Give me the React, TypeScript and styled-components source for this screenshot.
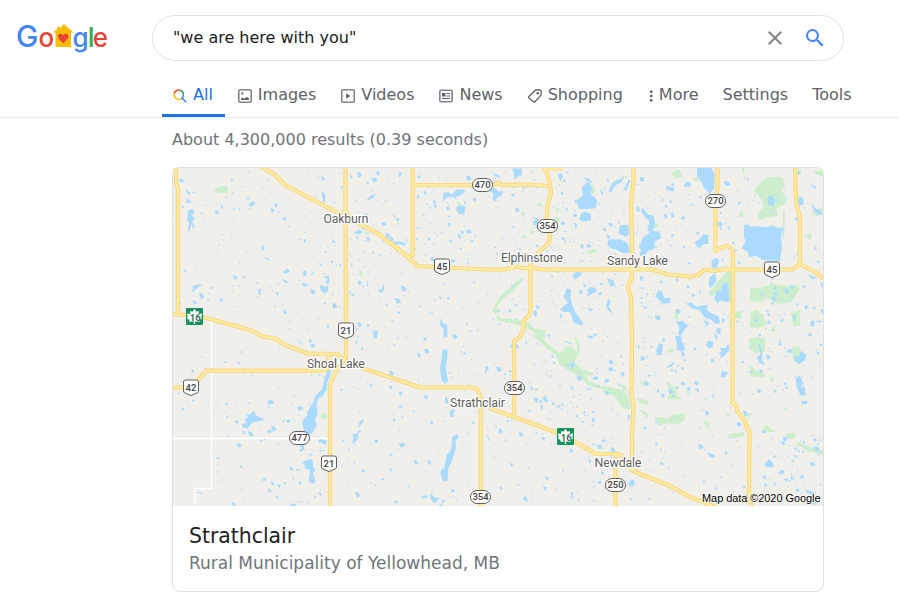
import type { ReactNode } from "react";
import styled, { createGlobalStyle } from "styled-components";

const App = () => {
  return (
    <>
      <GlobalStyle />
      <Header>
        <Logo />
        <SearchBox>
          <Query>"we are here with you"</Query>
          <ClearIcon />
          <SearchIcon />
        </SearchBox>
      </Header>

      <Nav>
        {tabs.map((tab) => (
          <Tab key={tab.title} $active={tab.active} $gap={tab.gap}>
            {tab.icon}
            {tab.title}
          </Tab>
        ))}
      </Nav>

      <Main>
        <Stats>About 4,300,000 results (0.39 seconds)</Stats>
        <Card>
          <TownMap />
          <CardText>
            <Title>Strathclair</Title>
            <Subtitle>Rural Municipality of Yellowhead, MB</Subtitle>
          </CardText>
        </Card>
      </Main>
    </>
  );
};

export default App;

const Logo = () => (
  <LogoSvg viewBox="0 0 92 34">
    <text y="25" fontFamily="Inter, sans-serif" fontWeight="500">
      <tspan x="-1" fontSize="30" fill="#4285f4">G</tspan>
      <tspan x="21.600" fontSize="26" fill="#ea4335">o</tspan>
      <tspan x="55.400" fontSize="26" fill="#4285f4" letterSpacing="-.8">g</tspan>
      <tspan fontSize="27" fill="#34a853" letterSpacing="-1.800">l</tspan>
      <tspan fontSize="26" fill="#ea4335">e</tspan>
    </text>
    <path d="M36 10.500 40 7.200V5h3v1L47 2l9.500 8.500H54V25H38.500V10.500Z" fill="#fbbc04" />
    <path d="M46.200 21.500C43 18.500 41 16.500 41 14.300c0-3.300 4-3.400 5.200-.9 1.200-2.500 5.200-2.400 5.200.9 0 2.200-2 4.200-5.200 7.200Z" fill="#ea4335" />
  </LogoSvg>
);

const ClearIcon = () => (
  <BoxIcon viewBox="0 0 24 24" $color="#80868b">
    <path d="M19 6.410 17.590 5 12 10.590 6.410 5 5 6.410 10.590 12 5 17.590 6.410 19 12 13.410 17.590 19 19 17.590 13.410 12Z" />
  </BoxIcon>
);

const SearchIcon = () => (
  <BoxIcon viewBox="0 0 24 24" $color="#4285f4">
    <path d="M15.500 14h-.79l-.28-.27A6.471 6.471 0 0 0 16 9.500 6.500 6.500 0 1 0 9.500 16c1.610 0 3.090-.59 4.230-1.570l.27.28v.79l5 4.990L20.490 19l-4.990-5zm-6 0C7.010 14 5 11.990 5 9.500S7.010 5 9.500 5 14 7.010 14 9.500 11.990 14 9.500 14z" />
  </BoxIcon>
);

const AllIcon = () => (
  <TabIcon viewBox="0 0 14 14" fill="none" strokeWidth="1.500">
    <path d="M1.300 4.200A4.700 4.700 0 0 1 7.300 1.300" stroke="#ea4335" />
    <path d="M7.300 1.300A4.700 4.700 0 0 1 10.400 5.700" stroke="#34a853" />
    <path d="M10.400 5.700A4.700 4.700 0 0 1 8 9.800M9 9l4.200 4.200" stroke="#4285f4" />
    <path d="M8 9.800A4.700 4.700 0 0 1 1.300 4.200" stroke="#fbbc04" />
  </TabIcon>
);

const ImageIcon = () => (
  <TabIcon viewBox="0 0 14 14">
    <rect x=".8" y=".8" width="12.400" height="12.400" rx="1.200" fill="none" stroke="#80868b" strokeWidth="1.600" />
    <path d="M3 11V9.600l1.800-1.100 1.700 1.200 2.300-2L11 9.800V11Z" fill="#5f6368" />
    <circle cx="4.400" cy="4.400" r="1.100" fill="#5f6368" />
  </TabIcon>
);

const VideoIcon = () => (
  <TabIcon viewBox="0 0 14 14">
    <rect x=".8" y=".8" width="12.400" height="12.400" rx="1.200" fill="none" stroke="#80868b" strokeWidth="1.600" />
    <path d="M5.200 4.200v5.600l4.100-2.800Z" fill="#5f6368" />
  </TabIcon>
);

const NewsIcon = () => (
  <TabIcon viewBox="0 0 14 14">
    <rect x=".8" y="1.300" width="12.400" height="11.400" rx="1.200" fill="none" stroke="#80868b" strokeWidth="1.600" />
    <path d="M3 4h3.500v3.500H3Z" fill="#5f6368" />
    <path d="M7.500 4.500H11M7.500 7H11M3 9.500h8" stroke="#5f6368" strokeWidth="1.100" />
  </TabIcon>
);

const TagIcon = () => (
  <TabIcon viewBox="0 0 14 14">
    <path d="m.9 7.500 5.800-5.800Q7.300 1.100 8.200 1l3.300-.2q1.600 0 1.700 1.600L13 5.400q0 .9-.6 1.500L6.900 12.700q-.7.700-1.400 0L.9 8.900q-.6-.7 0-1.400Z" fill="none" stroke="#5f6368" strokeWidth="1.300" />
    <circle cx="9.700" cy="4.300" r="1.250" fill="#5f6368" />
  </TabIcon>
);

const MoreIcon = () => (
  <DotsIcon viewBox="0 0 4 14" fill="#5f6368">
    <rect x="1" y="1.500" width="2.500" height="2.500" rx=".7" />
    <rect x="1" y="5.800" width="2.500" height="2.500" rx=".7" />
    <rect x="1" y="10.100" width="2.500" height="2.500" rx=".7" />
  </DotsIcon>
);

type TabData = { title: string; gap: number; active?: boolean; icon?: ReactNode };

const tabs: TabData[] = [
  { title: "All", gap: 13, active: true, icon: <AllIcon /> },
  { title: "Images", gap: 25, icon: <ImageIcon /> },
  { title: "Videos", gap: 25, icon: <VideoIcon /> },
  { title: "News", gap: 25, icon: <NewsIcon /> },
  { title: "Shopping", gap: 26, icon: <TagIcon /> },
  { title: "More", gap: 24, icon: <MoreIcon /> },
  { title: "Settings", gap: 24 },
  { title: "Tools", gap: 0 },
];

// Terrain is drawn per tile, three units to a map pixel
const tiles = [
  {
    x: 165,
    y: 160,
    park: "M145 98 157 83 172 77 189 85 188 98ZM583 335 592 331 594 347 583 345ZM198 392 205 387 209 399ZM600 218 612 215 614 224 602 225Z",
    water:
      "M70 150 85 148 88 158 79 165 89 175 82 185 90 205 84 203 80 192 72 216 68 210 73 190 66 180ZM65 85 70 95 77 99 74 108 70 100 64 98ZM65 115 75 121 75 130 65 130ZM252 130 268 123 270 132 262 139 255 138ZM240 107 248 113 256 115 248 119ZM165 132 175 140 171 147ZM81 378 97 375 107 369 98 384 90 389ZM414 333 423 333 425 344 416 352ZM360 330 368 326 375 334 367 340 358 340ZM352 355 370 365 372 370 357 367ZM473 350 492 348 493 370 480 369 488 357ZM464 375 479 380 490 376 489 392 480 401 467 391ZM412 368 428 372 428 379 413 377ZM604 121 618 106 630 102 628 110 612 120ZM567 216 582 209 594 215 588 221 570 222ZM470 96 480 100 481 129 474 125ZM296 291 308 293 318 303 308 300ZM440 330 448 341 443 342ZM580 360 590 366 586 378 579 370ZM626 513 638 512 636 535 625 534ZM570 500 579 507 576 514ZM278 387 285 386 288 405 282 404ZM333 395 342 397 338 410ZM640 391 650 388 655 370 658 389 648 400Z",
  },
  {
    x: 385,
    y: 160,
    park: "M413 350 416 358 385 393 348 423 335 440 344 457 330 460 321 455 332 430 348 405ZM330 460 350 475 400 479 436 490 438 502 480 512 479 537 464 530 434 508 400 496 338 481ZM525 40 536 50 523 70ZM618 60 630 92 620 105ZM455 133 464 124 474 140 466 141ZM510 145 522 147 515 161ZM408 235 415 223 426 233ZM406 159 420 154 418 172ZM508 170 526 176 515 195ZM215 120 228 133 218 138ZM605 273 630 267 636 275 610 281ZM432 200 447 217 437 224ZM37 180 43 190 38 197Z",
    water:
      "M591 80 610 64 620 82 618 105 637 120 632 145 603 147 581 146 577 120 593 107ZM590 158 603 155 618 163 618 181 595 185 582 177ZM596 53 612 55 623 68 606 64ZM175 100 190 96 200 104 215 88 234 91 230 105 215 109 200 111 185 113 173 124ZM308 92 327 83 342 95 355 93 349 108 335 112 334 125 322 118 326 100ZM213 142 226 135 240 139 239 160 225 164 215 153ZM382 25 411 26 410 49 400 49 389 59 387 42ZM318 32 328 41 343 46 348 55 330 49ZM230 85 240 93 236 106ZM545 385 558 389 556 415 562 435 571 456 596 492 588 497 567 488 555 456 537 456 525 448 548 430 540 402ZM20 247 40 244 63 250 60 257 40 251 25 263ZM563 346 575 335 592 338 583 350 568 359ZM167 475 176 492 187 493 187 530 176 532 176 506 165 496ZM606 389 617 380 628 385 629 395 613 407ZM448 450 456 455 454 472 445 465ZM607 443 625 447 616 456ZM376 103 388 101 385 111ZM264 113 274 115 272 125 263 121ZM60 235 66 239 65 250ZM642 83 655 100 653 108ZM246 301 254 312 248 315Z",
  },
  {
    x: 600,
    y: 160,
    park: "M490 60 505 52 530 50 549 55 556 88 540 87 556 105 558 130 530 145 532 168 512 170 478 179 472 163 490 140 485 120 462 90ZM592 24 605 31 600 44 590 40ZM228 27 240 32 245 50 230 56 215 43ZM550 150 555 155 552 235 547 230ZM450 382 478 385 520 371 559 378 590 373 600 386 580 418 565 428 532 432 500 412 482 426 450 422ZM453 455 468 450 490 465 501 494 475 505 449 500ZM378 335 395 335 395 428 372 420 350 395 334 410 325 400 353 365ZM408 456 425 452 423 476 404 473ZM227 450 243 454 232 472 240 480 223 475ZM635 155 668 140 668 160 650 169ZM615 230 635 218 632 240ZM414 170 424 150 433 170ZM275 58 290 50 297 65ZM425 24 435 24 430 45ZM640 36 669 30 666 48 650 45ZM147 202 170 190 175 198 158 209ZM510 510 526 496 524 515ZM572 460 600 450 600 497 580 500Z",
    water:
      "M432 194 445 194 453 200 470 198 500 202 520 196 545 211 543 235 546 262 540 303 490 301 470 287 448 291 443 275 425 265 437 244 432 230ZM291 24 334 24 344 42 342 85 332 98 313 86 304 65 291 48ZM123 150 130 145 145 164 161 167 166 189 158 211 180 218 184 235 165 243 162 268 143 273 133 292 119 286 124 270 117 260 130 230 148 220 142 202 150 187 130 164ZM60 195 85 195 88 220 80 230 55 222ZM25 240 40 238 65 240 83 250 90 278 70 280 45 268 30 265 22 255ZM25 95 37 67 67 54 66 65 43 78 36 95ZM300 235 310 223 325 225 325 252 310 252 300 264 291 260 284 247ZM502 110 515 108 526 122 520 138 505 135ZM595 110 610 113 611 133 595 138ZM634 130 645 145 660 150 668 163 655 165 640 151ZM335 300 350 294 358 299 351 324 335 323ZM330 352 345 340 350 362 333 385 325 375ZM347 395 363 390 370 370 385 370 388 425 373 425 364 421 352 430 343 417ZM258 430 275 428 290 440 324 434 320 448 333 460 355 468 361 490 346 492 335 480 315 473 298 450 275 445ZM228 485 245 482 265 497 256 505 246 523 235 524 238 500ZM175 390 187 395 193 415 212 412 210 429 190 432 178 420 166 409ZM190 160 204 168 196 179ZM260 65 272 68 273 79 250 81ZM198 77 224 83 220 95 198 88ZM25 415 33 425 26 440 38 460 28 455 18 438ZM85 60 92 61 80 90 70 92ZM120 50 133 52 131 65 120 62ZM635 480 645 485 640 502 629 495ZM576 464 590 470 582 483ZM350 505 362 504 361 524 350 519ZM625 345 650 352 637 358ZM660 366 669 370 667 388ZM320 483 330 490 315 503ZM410 320 415 330 409 337ZM520 395 534 400 528 410ZM480 400 489 396 487 410ZM500 462 510 458 508 470ZM462 480 472 477 470 490Z",
  },
  {
    x: 165,
    y: 335,
    park: "M470 132 488 113 495 125 485 136 476 130ZM466 240 480 234 489 246 471 253ZM392 402 407 402 405 410 395 409ZM340 38 347 40 344 49Z",
    water:
      "M487 105 500 108 487 143 486 163 472 184 460 190 454 213 459 240 450 251 456 272 440 296 421 302 414 275 412 258 427 240 432 220 442 208 450 185 470 163 478 134ZM407 330 415 328 419 349 411 343ZM243 235 254 240 267 225 272 240 301 254 282 259 262 262 248 280 233 279 231 268 242 264 240 250 250 250ZM417 378 435 372 443 376 444 394 452 405 444 414 452 440 443 447 431 437 435 406 420 400ZM306 200 315 193 328 201 323 207 310 207ZM458 317 467 312 484 316 484 330 470 324ZM580 280 583 262 596 250 594 262ZM562 299 581 293 577 316 561 326 565 310ZM627 315 639 315 639 324 631 324ZM335 448 347 451 343 461ZM127 197 142 209 135 204ZM90 473 108 472 114 479 101 475ZM376 506 392 506 395 512 377 512ZM458 472 469 475 468 485ZM614 143 623 151 615 159ZM570 20 578 13 575 30ZM648 428 660 433 650 437Z",
  },
  {
    x: 385,
    y: 335,
    park: "M440 0 460 0 485 24 520 52 538 48 535 38 560 35 581 57 568 80 590 102 627 115 617 125 603 117 610 137 650 154 632 159 607 149 583 124 553 109 522 88 513 63 487 39ZM569 5 581 20 586 40 578 62 575 27ZM650 160 690 162 690 182 676 180ZM445 160 458 160 452 168Z",
    water:
      "M172 45 187 42 187 70 182 95 189 138 182 146 169 137 165 100 170 70ZM202 305 215 297 222 305 211 318 213 338 202 375 189 402 188 437 174 438 166 414 169 404 178 399 185 360 199 343ZM180 185 188 190 190 206 180 204ZM202 223 209 224 203 246 196 246 194 230ZM15 105 26 112 24 122 13 121ZM136 474 147 487 163 490 148 505 136 491ZM304 288 308 305 318 317 310 315ZM10 398 21 403 18 410ZM445 185 459 190 458 205 450 199ZM472 190 480 182 490 197 483 204ZM465 207 475 216 469 227ZM556 340 565 347 554 355ZM610 372 618 375 614 388ZM474 455 486 457 480 467ZM417 492 430 494 424 501ZM606 2 625 2 622 12 610 8ZM555 470 565 475 562 487Z",
  },
  {
    x: 600,
    y: 335,
    park: "M0 154 30 155 65 164 82 180 92 208 90 225 70 220 44 184 15 174ZM48 145 75 150 86 170 65 158ZM108 190 140 195 149 212 119 203ZM115 222 148 237 140 249ZM164 246 205 250 215 239 254 236 255 254 230 268 206 264 175 272ZM196 137 230 160 228 180 250 191 201 194 210 170ZM118 139 143 140 130 154ZM201 46 216 38 223 49 206 55ZM308 255 325 262 329 288ZM383 298 430 291 434 303 410 309 394 308ZM440 255 446 236 461 232ZM487 290 493 272 503 270 515 283 532 291 505 291ZM553 296 590 295 583 310 568 311ZM591 320 640 340 669 345 669 361 625 349 592 330ZM447 10 475 8 495 10 495 50 465 55 448 40ZM449 90 465 103 494 118 493 127 451 124ZM576 33 598 35 606 85 590 88 577 63ZM508 125 523 125 517 148ZM370 224 392 244 382 242ZM312 184 323 192 318 200ZM545 229 563 212 560 225ZM252 155 270 174 264 177Z",
    water:
      "M225 3 243 1 246 20 255 40 249 50 230 46 230 23ZM170 42 178 24 189 29 184 60 170 61ZM360 38 377 40 386 25 388 45 370 65 359 68 365 55ZM324 17 340 20 338 37 328 41 318 30ZM200 97 217 84 225 82 216 94 202 99ZM474 25 481 30 488 53 486 75 496 91 480 84 470 68 482 57ZM583 60 595 66 603 47 620 60 615 75 598 88 582 75ZM587 127 600 123 610 145 603 155 615 158 617 181 602 182 590 155ZM605 197 623 198 621 208 604 206ZM92 435 103 434 104 450 90 456 85 447ZM320 348 329 355 344 360 345 370 328 364ZM492 390 508 371 521 388 520 397 500 395ZM540 405 553 405 553 417 540 415ZM574 412 580 435 572 433ZM550 432 565 430 560 441ZM617 463 642 473 640 480 620 473ZM365 107 380 113 374 130 363 124ZM165 320 174 324 168 333ZM140 488 153 489 147 495ZM188 8 195 10 193 23 186 18ZM432 480 458 476 458 488 438 493ZM489 420 499 425 493 436Z",
  },
];

// [x, y, width, height, count] of an area sprinkled with small ponds
const pondAreas = [
  [175, 170, 105, 140, 75],
  [280, 170, 130, 180, 170],
  [415, 170, 200, 95, 165],
  [415, 275, 130, 110, 75],
  [545, 270, 85, 150, 105],
  [605, 170, 130, 95, 95],
  [637, 275, 93, 120, 130],
  [735, 170, 86, 95, 35],
  [736, 275, 86, 120, 85],
  [175, 335, 160, 80, 40],
  [212, 395, 115, 95, 80],
  [180, 490, 290, 14, 20],
  [335, 370, 145, 120, 65],
  [485, 360, 140, 85, 75],
  [490, 445, 120, 58, 30],
  [635, 400, 110, 95, 45],
  [755, 430, 66, 72, 65],
  [583, 435, 55, 65, 28],
];

const makePonds = () => {
  let seed = 71;
  const rand = () => {
    seed = (seed * 16807) % 2147483647;
    return seed / 2147483647;
  };
  let d = "";
  pondAreas.forEach(([x, y, width, height, count]) => {
    for (let i = 0; i < count; i++) {
      const px = x + rand() * width;
      const py = y + rand() * height;
      const size = 0.9 + rand() ** 4 * 2.4;
      const w = size * (0.8 + rand() * 0.7);
      const lean = (rand() - 0.5) * size;
      d += `M${px.toFixed(1)} ${py.toFixed(1)}l${w.toFixed(1)} ${lean.toFixed(1)} ${(w * 0.4).toFixed(1)} ${size.toFixed(1)} ${(-w).toFixed(1)} ${(size * 0.5).toFixed(1)}Z`;
    }
  });
  return d;
};

const ponds = makePonds();

const roads = [
  "M176 166V183L178 188V314",
  "M172 314 185 315 203 317 250 330 264 337 274 338 285 345 308 353.500 337 354 344 360 365 369 395 379 420 387.500H472Q478 388 479.500 394L481 401 492 409 514 417 555 432 574 441 596 454H617Q622 454 626 461L632 470 640 474 670 486 690 497 716 507",
  "M345.500 166 346 356 342 363 336 371 330 385V508",
  "M172 387.500H192L198 380 206.500 370.700H322Q328.500 370 328.500 366V354",
  "M260 166 275 175 285 185 337 212.500 345 213 358 223 377 233 398 249 408 257 417 266 485 269.500H505L517 266.500 524 268.500 533 267.500 540 269.500H652L668 274.500 690 276.700 698 275 705 269.500 715 271 721 269.500H792L800 264 813 271 825 279",
  "M412.800 166V255L408 257",
  "M413 185H493L498 183 502 185 527 184.500 548 186",
  "M564 168.500H544L547 173 550.500 187 551 193 547 207V227L550 235 549 243 538 253 530.500 263V313L523 322 524 328 520 337 514 341V417",
  "M480.700 402V508",
  "M633.500 166V180L631 203 632 240V277L628 287 631 297 632 340 631.500 395 633.500 405 632 435V470",
  "M717.500 166V190L715.500 197V251L725 246Q731 246 733 252L732.500 403 736.500 406.500 737 411 745.500 422 747 428 749.500 431 749 498 752 508",
  "M795 166 796 203 800 217V264",
  "M615.500 454V508",
];

const shields = [
  { x: 482.5, y: 185, label: "470" },
  { x: 547.5, y: 226, label: "354" },
  { x: 514.5, y: 388, label: "354" },
  { x: 480.5, y: 497, label: "354" },
  { x: 299.5, y: 438, label: "477" },
  { x: 615.5, y: 485, label: "250" },
  { x: 715.5, y: 201, label: "270" },
  { x: 442, y: 266.5, label: "45" },
  { x: 772, y: 269.5, label: "45" },
  { x: 346, y: 330.5, label: "21" },
  { x: 329, y: 463.5, label: "21" },
  { x: 191, y: 387.5, label: "42" },
];

const towns = [
  { x: 346, y: 223, width: 45, name: "Oakburn" },
  { x: 532, y: 262, width: 62, name: "Elphinstone" },
  { x: 637.5, y: 265.4, width: 61, name: "Sandy Lake" },
  { x: 336, y: 368, width: 58, name: "Shoal Lake" },
  { x: 477.5, y: 407, width: 55, name: "Strathclair" },
  { x: 618, y: 467.4, width: 47, name: "Newdale" },
];

const Shield = ({ x, y, label }: { x: number; y: number; label: string }) => (
  <g transform={`translate(${x} ${y})`}>
    {label.length > 2 ? (
      <rect x="-10" y="-6.500" width="20" height="13" rx="6.500" fill="#fff" stroke="#606060" />
    ) : (
      <path d="M-7.500-5.500Q-7.500-7.500-5.500-7.500H5.500Q7.500-7.500 7.500-5.500V3.500Q7.500 5 6 5.500L0 8-6 5.500Q-7.500 5-7.500 3.500Z" fill="#fff" stroke="#606060" />
    )}
    <ShieldText y={label.length > 2 ? 3.3 : 3.5}>{label}</ShieldText>
  </g>
);

const TransCanada = ({ x, y }: { x: number; y: number }) => (
  <g transform={`translate(${x} ${y})`}>
    <rect x="-8.500" y="-8.500" width="17" height="17" rx="1" fill="#15935f" />
    <path d="M0-7.700 2-4.800 4.300-5.500 4.300-2.500 7.800-3 6.800 0 7.500 2 5 3.500 5 5.300 .6 5V7.500H-.6V5L-5 5.300-5 3.500-7.500 2-6.800 0-7.800-3-4.300-2.500-4.300-5.500-2-4.800Z" fill="#fff" />
    <RouteText x=".7" y="4">16</RouteText>
  </g>
);

const TownMap = () => (
  <MapSvg viewBox="173 168 650 338">
    <rect x="173" y="168" width="650" height="338" fill="#f0efea" />
    {tiles.map((tile) => (
      <g key={`${tile.x}-${tile.y}`} transform={`translate(${tile.x} ${tile.y}) scale(.33333)`}>
        <path d={tile.park} fill="#cdeecd" />
      </g>
    ))}
    <path d={ponds} fill="#aadaff" />
    {tiles.map((tile) => (
      <g key={`${tile.x}-${tile.y}`} transform={`translate(${tile.x} ${tile.y}) scale(.33333)`}>
        <path d={tile.water} fill="#aadaff" />
      </g>
    ))}
    <path d="M211.500 320V488.500H195V506M173 438.500H327" fill="none" stroke="#fff" strokeWidth="1.300" />
    <g fill="none" strokeLinejoin="round">
      {roads.map((road) => (
        <path key={road} d={road} stroke="#f9d577" strokeWidth="4.200" />
      ))}
      {roads.map((road) => (
        <path key={road} d={road} stroke="#ffeba3" strokeWidth="2.300" />
      ))}
    </g>
    {shields.map((shield) => (
      <Shield key={`${shield.x}-${shield.y}`} {...shield} />
    ))}
    <TransCanada x={194.5} y={316.5} />
    <TransCanada x={565.5} y={436.5} />
    {towns.map((town) => (
      <TownText key={town.name} x={town.x} y={town.y} textLength={town.width}>
        {town.name}
      </TownText>
    ))}
    <Credit x="820.500" y="501.500" textLength="118.500">
      Map data ©2020 Google
    </Credit>
  </MapSvg>
);

const GlobalStyle = createGlobalStyle`
  * {
    box-sizing: border-box;
  }

  body {
    margin: 0;
    overflow: hidden;
    background: #fff;
    font-family: "DejaVu Sans", sans-serif;
    font-size: 16px;
  }
`;

const Header = styled.header`
  display: flex;
  align-items: flex-start;
  height: 72px;
  padding: 15px 0 0 17px;
`;

const LogoSvg = styled.svg`
  width: 92px;
  height: 34px;
  margin: 7px 43px 0 0;
  overflow: visible;
`;

const SearchBox = styled.div`
  display: flex;
  align-items: center;
  width: 692px;
  height: 46px;
  padding: 0 16px 0 20px;
  border: 1px solid #dfe1e5;
  border-radius: 24px;
`;

const Query = styled.span`
  flex: 1;
  padding-bottom: 2px;
  color: #202124;
`;

const BoxIcon = styled.svg<{ $color: string }>`
  width: 24px;
  height: 24px;
  margin-left: 16px;
  fill: ${(props) => props.$color};
`;

const Nav = styled.nav`
  display: flex;
  height: 46px;
  padding-left: 162px;
  border-bottom: 1px solid #ebebeb;
`;

const Tab = styled.div<{ $active?: boolean; $gap: number }>`
  display: flex;
  flex-shrink: 0;
  align-items: center;
  height: 45px;
  margin-right: ${(props) => props.$gap}px;
  padding: ${(props) => (props.$active ? "2px 12px 0 11px" : "2px 0 0")};
  border-bottom: 3px solid ${(props) => (props.$active ? "#1a73e8" : "transparent")};
  color: ${(props) => (props.$active ? "#1a73e8" : "#5f6368")};
  white-space: nowrap;
`;

const TabIcon = styled.svg`
  width: 14px;
  height: 14px;
  margin: 4px 6px 0 0;
`;

const DotsIcon = styled.svg`
  width: 4px;
  height: 14px;
  margin: 4px 6px 0 0;
`;

const Main = styled.main`
  width: 652px;
  margin-left: 172px;
`;

const Stats = styled.div`
  height: 49px;
  line-height: 43px;
  color: #70757a;
`;

const Card = styled.section`
  height: 425px;
  border: 1px solid #dfe1e5;
  border-radius: 8px;
`;

const MapSvg = styled.svg`
  display: block;
  width: 650px;
  height: 338px;
`;

const CardText = styled.div`
  padding: 16px;
`;

const Title = styled.div`
  font-size: 20.4px;
  line-height: 28px;
  color: #202124;
`;

const Subtitle = styled.div`
  font-size: 17px;
  line-height: 26px;
  color: #70757a;
`;

const ShieldText = styled.text`
  font: 500 9.5px Roboto, sans-serif;
  fill: #444;
  text-anchor: middle;
`;

const RouteText = styled.text`
  font: 700 9.5px Roboto, sans-serif;
  fill: #3c6f57;
  text-anchor: middle;
`;

const TownText = styled.text`
  font: 400 12.5px Roboto, sans-serif;
  fill: #5c5c5c;
  stroke: #fff;
  stroke-width: 2.5px;
  stroke-linejoin: round;
  paint-order: stroke;
  text-anchor: middle;
`;

const Credit = styled.text`
  font: 400 11px "Liberation Sans", sans-serif;
  fill: #000;
  stroke: rgba(255, 255, 255, 0.5);
  stroke-width: 2px;
  paint-order: stroke;
  text-anchor: end;
`;
